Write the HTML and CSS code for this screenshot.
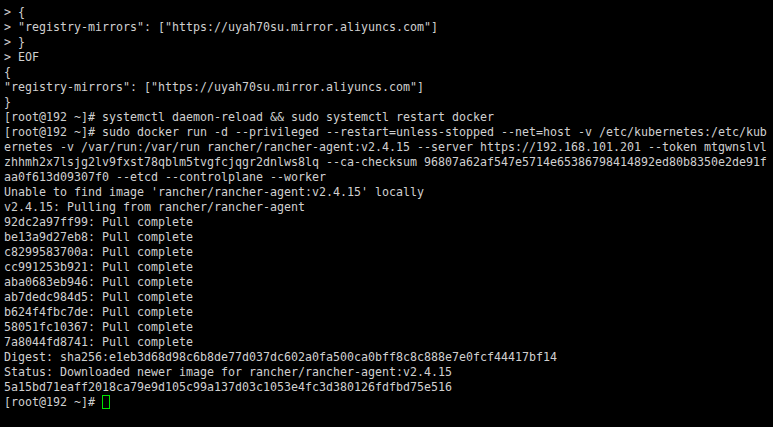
FILE: index.html
```html
<!DOCTYPE html>
<html>
<head>
<meta charset="utf-8">
<link rel="stylesheet" href="styles.css">
</head>
<body>
<pre class="term">&gt; {
&gt; "registry-mirrors": ["https://uyah70su.mirror.aliyuncs.com"]
&gt; }
&gt; EOF
{
"registry-mirrors": ["https://uyah70su.mirror.aliyuncs.com"]
}
[root@192 ~]# systemctl daemon-reload &amp;&amp; sudo systemctl restart docker
[root@192 ~]# sudo docker run -d --privileged --restart=unless-stopped --net=host -v /etc/kubernetes:/etc/kub
ernetes -v /var/run:/var/run rancher/rancher-agent:v2.4.15 --server https://192.168.101.201 --token mtgwnslvl
zhhmh2x7lsjg2lv9fxst78qblm5tvgfcjqgr2dnlws8lq --ca-checksum 96807a62af547e5714e65386798414892ed80b8350e2de91f
aa0f613d09307f0 --etcd --controlplane --worker
Unable to find image 'rancher/rancher-agent:v2.4.15' locally
v2.4.15: Pulling from rancher/rancher-agent
92dc2a97ff99: Pull complete
be13a9d27eb8: Pull complete
c8299583700a: Pull complete
cc991253b921: Pull complete
aba0683eb946: Pull complete
ab7dedc984d5: Pull complete
b624f4fbc7de: Pull complete
58051fc10367: Pull complete
7a8044fd8741: Pull complete
Digest: sha256:e1eb3d68d98c6b8de77d037dc602a0fa500ca0bff8c8c888e7e0fcf44417bf14
Status: Downloaded newer image for rancher/rancher-agent:v2.4.15
5a15bd71eaff2018ca79e9d105c99a137d03c1053e4fc3d380126fdfbd75e516
[root@192 ~]# <span class="cursor"></span></pre>
</body>
</html>
```
FILE: styles.css
```css
html, body {
  margin: 0;
  padding: 0;
  background: #000;
  height: 100%;
}
.term {
  margin: 0;
  padding: 5px 4px;
  font-family: "DejaVu Sans Mono", monospace;
  font-size: 11.63px;
  line-height: 15px;
  color: #d0d0d0;
  white-space: pre;
}
.cursor {
  display: inline-block;
  width: 6px;
  height: 12px;
  border: 1px solid #00e000;
  vertical-align: -3px;
}
```
